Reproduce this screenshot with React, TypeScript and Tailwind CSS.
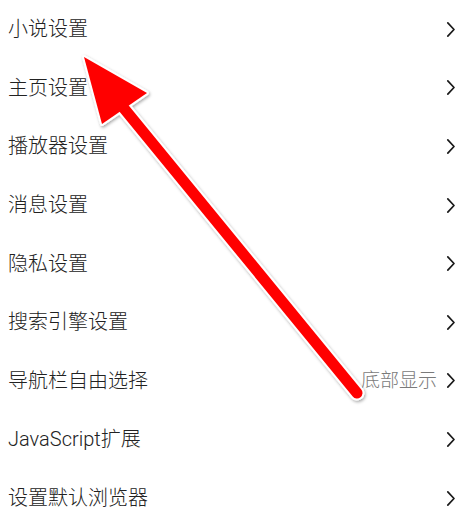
import React from "react";

const rows: { label: string; value?: string }[] = [
  { label: "小说设置" },
  { label: "主页设置" },
  { label: "播放器设置" },
  { label: "消息设置" },
  { label: "隐私设置" },
  { label: "搜索引擎设置" },
  { label: "导航栏自由选择", value: "底部显示" },
  { label: "JavaScript扩展" },
  { label: "设置默认浏览器" },
];

function Chevron() {
  return (
    <svg width="10" height="17" viewBox="0 0 10 17" className="shrink-0">
      <path d="M1.8 1.8 L8 8.5 L1.8 15.2" fill="none" stroke="#1a1a1a" strokeWidth="1.7" strokeLinecap="round" strokeLinejoin="round" />
    </svg>
  );
}

function Arrow() {
  return (
    <svg className="absolute left-0 top-0 pointer-events-none" width="469" height="531" viewBox="0 0 469 531">
      <defs>
        <filter id="sh" x="-20%" y="-20%" width="140%" height="140%">
          <feDropShadow dx="1" dy="1.5" stdDeviation="1.5" floodColor="#000" floodOpacity="0.35" />
        </filter>
      </defs>
      <g filter="url(#sh)">
        <line x1="122" y1="106" x2="357" y2="393" stroke="#fff" strokeWidth="15" strokeLinecap="round" />
        <polygon points="84,57 147,93 102,124" fill="#fff" stroke="#fff" strokeWidth="4" strokeLinejoin="round" />
      </g>
      <line x1="122" y1="106" x2="357" y2="393" stroke="#ff0000" strokeWidth="11" strokeLinecap="round" />
      <polygon points="84,57 147,93 102,124" fill="#ff0000" />
    </svg>
  );
}

export default function App() {
  return (
    <div
      className="relative w-[469px] h-[531px] overflow-hidden bg-white"
      style={{ fontFamily: 'Roboto, "Noto Sans CJK SC", sans-serif' }}
    >
      <div className="flex flex-col">
        {rows.map((r) => (
          <div key={r.label} className="flex h-[58.6px] items-center justify-between pl-[8px] pr-[13px]">
            <span className="text-[20px] font-light text-[#222222]">{r.label}</span>
            <div className="flex items-center gap-[9px]">
              {r.value && <span className="text-[19px] font-light text-[#7a7a7a]">{r.value}</span>}
              <Chevron />
            </div>
          </div>
        ))}
      </div>
      <Arrow />
    </div>
  );
}
